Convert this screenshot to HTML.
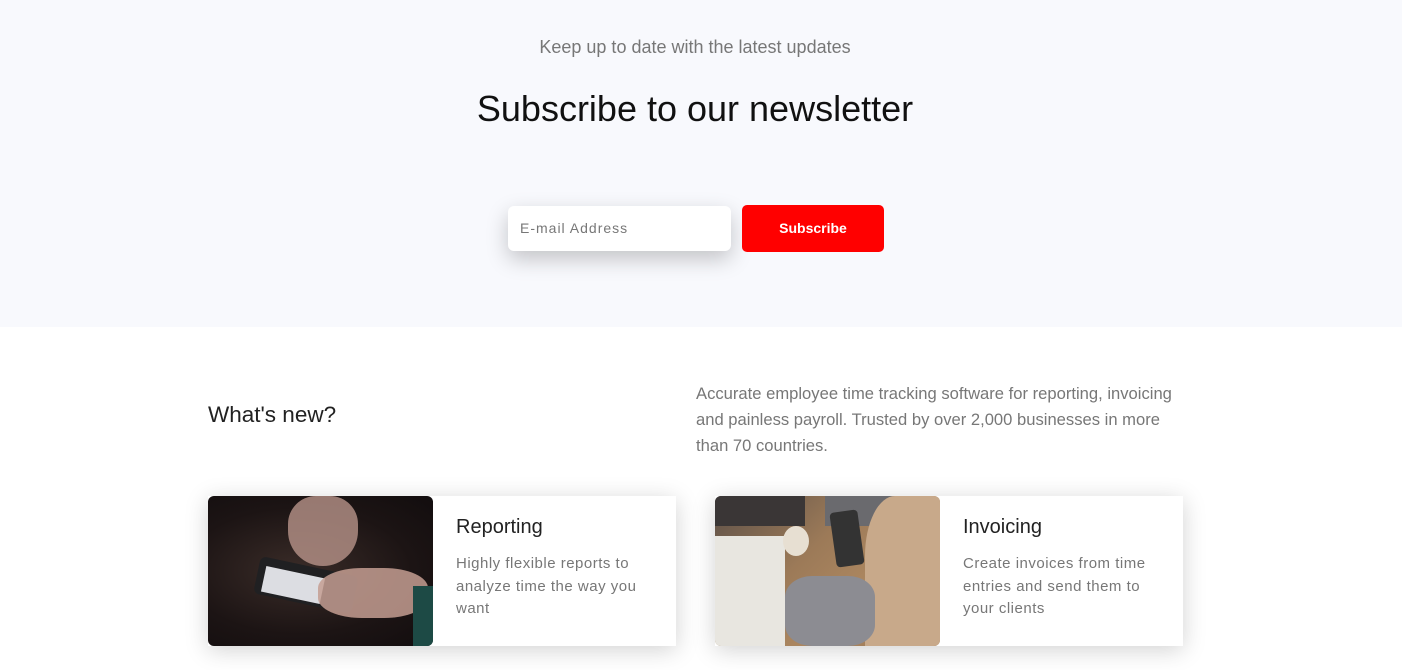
<!DOCTYPE html>
<html><head><meta charset="utf-8"><style>
*{margin:0;padding:0;box-sizing:border-box}
body{width:1402px;height:670px;overflow:hidden;background:#fff;font-family:"Liberation Sans",sans-serif}
.top{position:absolute;left:0;top:0;width:1402px;height:327px;background:#f8f9fd}
.kicker{position:absolute;top:37px;left:0;width:1390px;text-align:center;font-size:18px;color:#777}
h1{position:absolute;top:88px;left:0;width:1390px;text-align:center;font-size:36px;font-weight:400;color:#111}
.inp{position:absolute;left:508px;top:206px;width:223px;height:45px;background:#fff;border-radius:6px;box-shadow:0 8px 22px rgba(0,0,0,.22);font-size:14px;letter-spacing:1px;color:#777;padding:14px 0 0 12px}
.btn{position:absolute;left:742px;top:205px;width:142px;height:47px;background:#f00;border-radius:5px;color:#fff;font-weight:700;font-size:14px;text-align:center;line-height:47px}
.wn{position:absolute;left:208px;top:402px;font-size:22.5px;color:#222}
.desc{position:absolute;left:696px;top:381px;width:495px;font-size:16.6px;line-height:26px;color:#777}
.card{position:absolute;top:496px;width:468px;height:150px;background:#fff;box-shadow:0 4px 22px rgba(0,0,0,.18)}
.img{position:absolute;left:0;top:0;width:225px;height:150px;border-radius:6px;overflow:hidden}
.card h3{position:absolute;left:248px;top:20px;font-size:20px;font-weight:400;color:#222}
.card p{position:absolute;left:248px;top:57px;width:205px;font-size:15px;line-height:22.5px;letter-spacing:.5px;color:#777}
</style></head><body>
<div class="top">
<div class="kicker">Keep up to date with the latest updates</div>
<h1>Subscribe to our newsletter</h1>
<div class="inp">E-mail Address</div>
<div class="btn">Subscribe</div>
</div>
<div class="wn">What's new?</div>
<div class="desc">Accurate employee time tracking software for reporting, invoicing and painless payroll. Trusted by over 2,000 businesses in more than 70 countries.</div>
<div class="card" style="left:208px">
<div class="img" style="background:radial-gradient(ellipse at 40% 50%,#3a2c28 0%,#1c1414 60%,#120d0e 100%)">
<div style="position:absolute;left:80px;top:0;width:70px;height:70px;background:#b8948a;border-radius:40% 40% 50% 50%;opacity:.8"></div>
<div style="position:absolute;left:48px;top:70px;width:100px;height:38px;background:#202022;transform:rotate(12deg);border-radius:6px"></div>
<div style="position:absolute;left:55px;top:76px;width:60px;height:26px;background:#dcdde2;transform:rotate(12deg)"></div>
<div style="position:absolute;left:110px;top:72px;width:110px;height:50px;background:#c49e92;border-radius:40%;opacity:.85"></div>
<div style="position:absolute;left:205px;top:90px;width:20px;height:60px;background:#1d4a45"></div>
</div>
<h3>Reporting</h3>
<p>Highly flexible reports to analyze time the way you want</p>
</div>
<div class="card" style="left:715px">
<div class="img" style="background:linear-gradient(135deg,#5c5048 0%,#9c7a58 40%,#b08a62 70%,#8a6c50 100%)">
<div style="position:absolute;left:0;top:40px;width:70px;height:110px;background:#e8e6e0"></div>
<div style="position:absolute;left:0;top:0;width:90px;height:30px;background:#3a3636"></div>
<div style="position:absolute;left:68px;top:30px;width:26px;height:30px;background:#e7dfd2;border-radius:50%"></div>
<div style="position:absolute;left:110px;top:0;width:80px;height:30px;background:#6a6a6e"></div>
<div style="position:absolute;left:118px;top:15px;width:28px;height:55px;background:#333;transform:rotate(-8deg);border-radius:4px"></div>
<div style="position:absolute;left:150px;top:0;width:75px;height:150px;background:#c8a98a;border-radius:40% 0 0 0"></div>
<div style="position:absolute;left:70px;top:80px;width:90px;height:70px;background:#8c8c92;border-radius:30%"></div>
</div>
<h3>Invoicing</h3>
<p>Create invoices from time entries and send them to your clients</p>
</div>
</body></html>
